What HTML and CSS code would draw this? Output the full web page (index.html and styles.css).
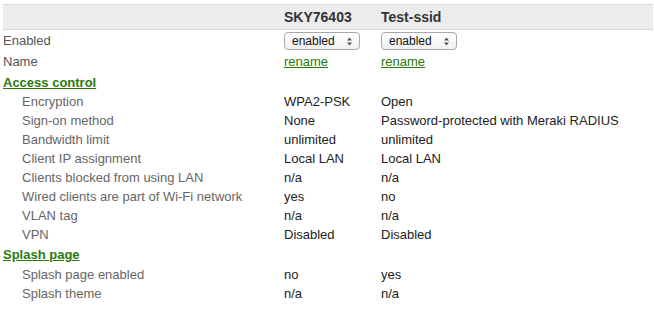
FILE: index.html
```html
<!DOCTYPE html>
<html lang="en">
<head>
  <meta charset="UTF-8" />
  <title>SSID settings</title>
  <link rel="stylesheet" href="styles.css">
</head>
<body>
  <table class="ssids">
    <thead>
      <tr>
        <th></th>
        <th>SKY76403</th>
        <th>Test-ssid</th>
      </tr>
    </thead>
    <tbody>
      <tr class="top">
        <td class="label">Enabled</td>
        <td><span class="select">enabled <svg width="7" height="9" viewBox="0 0 7 9"><path d="M3.5 0.5 L6 3.5 L1 3.5 Z M3.5 8.5 L6 5.5 L1 5.5 Z" fill="#555"/></svg></span></td>
        <td><span class="select">enabled <svg width="7" height="9" viewBox="0 0 7 9"><path d="M3.5 0.5 L6 3.5 L1 3.5 Z M3.5 8.5 L6 5.5 L1 5.5 Z" fill="#555"/></svg></span></td>
      </tr>
      <tr class="top">
        <td class="label">Name</td>
        <td><a href="#">rename</a></td>
        <td><a href="#">rename</a></td>
      </tr>
      <tr class="section">
        <td colspan="3"><a href="#">Access control</a></td>
      </tr>
      <tr><td class="sub">Encryption</td><td>WPA2-PSK</td><td>Open</td></tr>
      <tr><td class="sub">Sign-on method</td><td>None</td><td>Password-protected with Meraki RADIUS</td></tr>
      <tr><td class="sub">Bandwidth limit</td><td>unlimited</td><td>unlimited</td></tr>
      <tr><td class="sub">Client IP assignment</td><td>Local LAN</td><td>Local LAN</td></tr>
      <tr><td class="sub">Clients blocked from using LAN</td><td>n/a</td><td>n/a</td></tr>
      <tr><td class="sub">Wired clients are part of Wi-Fi network</td><td>yes</td><td>no</td></tr>
      <tr><td class="sub">VLAN tag</td><td>n/a</td><td>n/a</td></tr>
      <tr><td class="sub">VPN</td><td>Disabled</td><td>Disabled</td></tr>
      <tr class="section splash">
        <td colspan="3"><a href="#">Splash page</a></td>
      </tr>
      <tr><td class="sub">Splash page enabled</td><td>no</td><td>yes</td></tr>
      <tr><td class="sub">Splash theme</td><td>n/a</td><td>n/a</td></tr>
    </tbody>
  </table>
</body>
</html>
```

FILE: styles.css
```css
body {
  margin: 0;
  padding: 4px 1px 0 3px;
  font-family: 'Liberation Sans', Arial, sans-serif;
  font-size: 13px;
  color: #222;
  background: #fff;
}
.ssids {
  width: 650px;
  border-collapse: collapse;
}
.ssids th {
  height: 24px;
  padding: 0;
  text-align: left;
  font-size: 14px;
  font-weight: bold;
  color: #333;
  background-color: #ececec;
  border-top: 1px solid #dadada;
  border-bottom: 1px solid #dadada;
}
.ssids th:first-child {
  width: 281px;
}
.ssids th:nth-child(2) {
  width: 97px;
}
.ssids td {
  height: 19px;
  padding: 0;
  vertical-align: middle;
  white-space: nowrap;
}
.ssids tr.top td {
  height: 21px;
}
.label {
  color: #555;
}
.sub {
  color: #666;
  padding-left: 19px !important;
}
.section td {
  height: 20px;
}
.section.splash td {
  height: 21px;
}
.section a {
  font-weight: bold;
}
a {
  color: #2a7a0c;
  text-decoration: underline;
}
.select {
  display: inline-flex;
  align-items: center;
  justify-content: space-between;
  box-sizing: border-box;
  width: 76px;
  height: 18px;
  margin-top: 1px;
  padding: 0 6px 0 7px;
  font-size: 12px;
  color: #111;
  background: linear-gradient(#fff, #f1f1f1);
  border: 1px solid #a9a9a9;
  border-radius: 4px;
}
```
